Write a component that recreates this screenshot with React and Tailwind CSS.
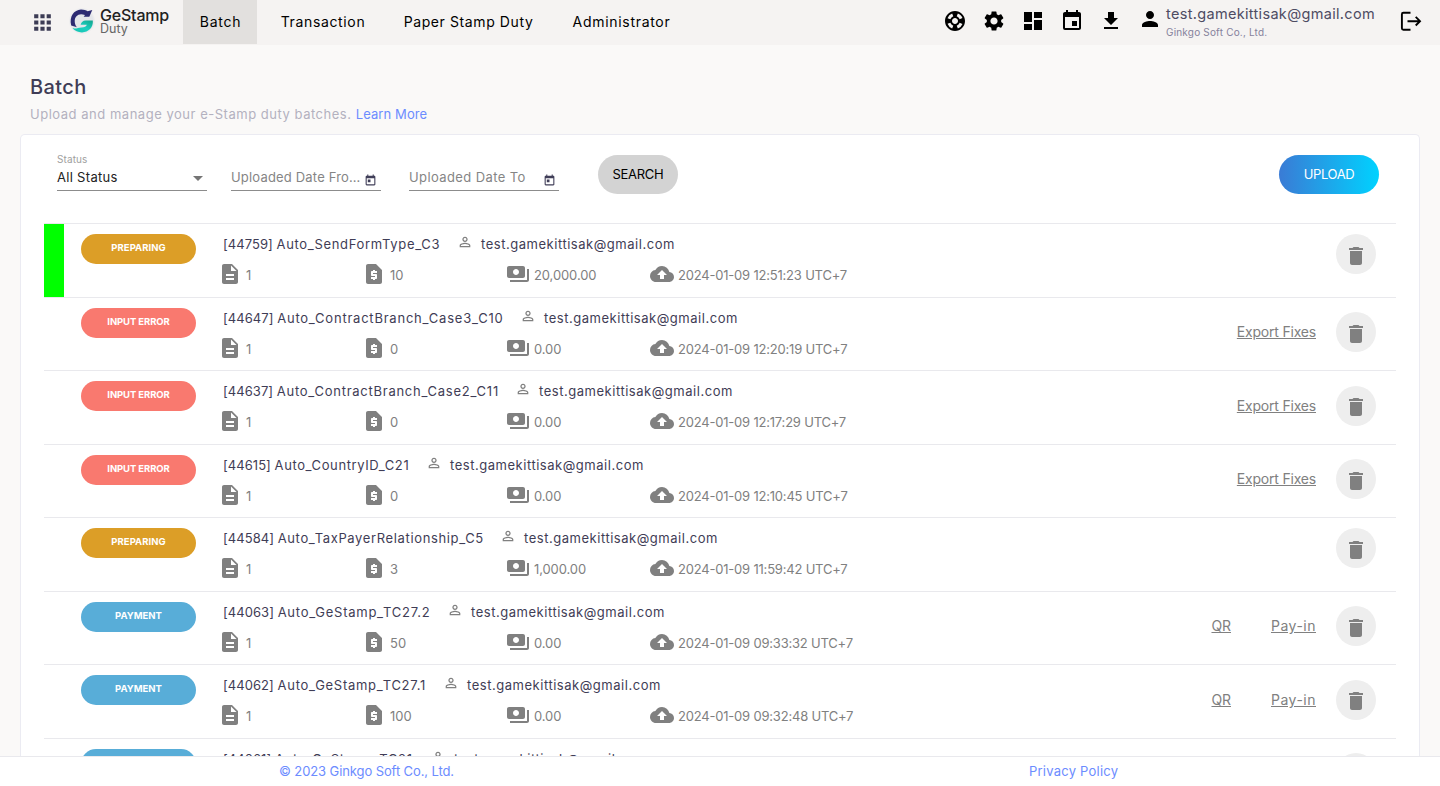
import React from "react";
import { MdApps, MdSupport, MdSettings, MdDashboard, MdEvent, MdDownload, MdPerson, MdDescription, MdRequestPage, MdPayments, MdBackup, MdPersonOutline, MdDelete, MdToday, MdArrowDropDown } from "react-icons/md";

const STATUS = {
  PREPARING: "bg-[#dc9e27] text-[9.5px] tracking-[0.05px]",
  "INPUT ERROR": "bg-[#f9796f] text-[9.5px] tracking-[-0.1px]",
  PAYMENT: "bg-[#58add8] text-[9.5px] tracking-[0px]",
};

const LINK_TRACKING = {
  "Export Fixes": "tracking-[-0.2px]",
  QR: "tracking-[-0.1px]",
  "Pay-in": "tracking-[0.5px]",
};

const ROWS = [
  { id: "44759", name: "Auto_SendFormType_C3", w: "w-[218px] tracking-[0.68px]", h: "h-[74px]", top: "mt-[10px]", icon: "mt-[4px]", status: "PREPARING", count: "10", amount: "20,000.00", date: "2024-01-09 12:51:23 UTC+7", links: [], active: true },
  { id: "44647", name: "Auto_ContractBranch_Case3_C10", w: "w-[281px] tracking-[0.78px]", h: "h-[73px]", top: "mt-[14px]", icon: "mt-[4px]", status: "INPUT ERROR", count: "0", amount: "0.00", date: "2024-01-09 12:20:19 UTC+7", links: ["Export Fixes"] },
  { id: "44637", name: "Auto_ContractBranch_Case2_C11", w: "w-[276px] tracking-[0.74px]", h: "h-[74px]", top: "mt-[15px]", icon: "mt-[2px]", status: "INPUT ERROR", count: "0", amount: "0.00", date: "2024-01-09 12:17:29 UTC+7", links: ["Export Fixes"] },
  { id: "44615", name: "Auto_CountryID_C21", w: "w-[187px] tracking-[0.6px]", h: "h-[73px]", top: "mt-[14px]", icon: "mt-[4px]", status: "INPUT ERROR", count: "0", amount: "0.00", date: "2024-01-09 12:10:45 UTC+7", links: ["Export Fixes"] },
  { id: "44584", name: "Auto_TaxPayerRelationship_C5", w: "w-[261px] tracking-[0.64px]", h: "h-[74px]", top: "mt-[10px]", icon: "mt-[4px]", status: "PREPARING", count: "3", amount: "1,000.00", date: "2024-01-09 11:59:42 UTC+7", links: [] },
  { id: "44063", name: "Auto_GeStamp_TC27.2", w: "w-[208px] tracking-[0.74px]", h: "h-[73px]", top: "mt-[14px]", icon: "mt-[4px]", status: "PAYMENT", count: "50", amount: "0.00", date: "2024-01-09 09:33:32 UTC+7", links: ["QR", "Pay-in"] },
  { id: "44062", name: "Auto_GeStamp_TC27.1", w: "w-[204px] tracking-[0.72px]", h: "h-[74px]", top: "mt-[15px]", icon: "mt-[2px]", status: "PAYMENT", count: "100", amount: "0.00", date: "2024-01-09 09:32:48 UTC+7", links: ["QR", "Pay-in"] },
  { id: "44061", name: "Auto_GeStamp_TC21", w: "w-[191px] tracking-[0.66px]", h: "h-[74px]", top: "mt-[14px]", icon: "mt-[4px]", status: "PAYMENT", count: "100", amount: "0.00", date: "2024-01-09 09:31:12 UTC+7", links: ["QR", "Pay-in"] },
];

function Logo() {
  return (
    <svg className="h-7 w-7 shrink-0" viewBox="0 0 28 28">
      <defs>
        <linearGradient id="teal" x1="0" y1="1" x2="1" y2="0">
          <stop offset="0" stopColor="#15c3b0" />
          <stop offset="0.5" stopColor="#1ccfc0" />
          <stop offset="1" stopColor="#12a58d" />
        </linearGradient>
        <radialGradient id="halo">
          <stop offset="0.8" stopColor="#e3e5ea" />
          <stop offset="1" stopColor="#f5f3f2" />
        </radialGradient>
      </defs>
      <circle cx="14" cy="14" r="13.500" fill="url(#halo)" />
      <path d="M3.200 18.500C1 9.500 6 3 13 2.600c3 0 5 .8 6.600 1.700L24.300 3l-3 6.700h-5.600l1.300-1.600C11 5.500 6.800 9 6.700 14c0 3 1 5 2.300 6.200L3.200 18.500z" fill="#2c2a72" />
      <path d="M4.500 21.300C9 21.800 10 20.600 13.500 20.400c3 0 4.700-.9 5.300-2.600H12.600c.7-2.400 2.400-4.100 5-4.200h7.200C25.500 20.500 20.500 25.300 14 25.400 10 25.400 7 24 4.500 21.300z" fill="url(#teal)" />
    </svg>
  );
}

function LogoutIcon({ className }) {
  return (
    <svg className={className} viewBox="0 0 24 24" fill="none" stroke="currentColor" strokeWidth="1.900">
      <path d="M11.500 3.800H4.400a1.500 1.500 0 0 0-1.500 1.500v13.900a1.500 1.500 0 0 0 1.500 1.500h7.100" />
      <path d="M8.500 12.200H20.600M16.700 7.900l4.300 4.300-4.300 4.300" />
    </svg>
  );
}

function Nav({ children, className }) {
  return <a className={"flex h-11 items-center justify-center whitespace-nowrap pb-px text-black " + className}>{children}</a>;
}

function Header() {
  return (
    <header className="flex h-[45px] shrink-0 bg-[#f5f3f2]">
      <div className="flex w-[183px] shrink-0 pl-[30px]">
        <MdApps className="mt-[10px] size-[25px] shrink-0 text-[#3c3c55]" />
        <div className="ml-[13px] mt-[7px]"><Logo /></div>
        <div className="ml-[4px] mt-[6px] text-[#222]">
          <div className="text-[16px] font-medium leading-[18px] tracking-[-0.2px]">GeStamp</div>
          <div className="-mt-[3px] text-[12.5px] leading-[15px] text-[#666]">Duty</div>
        </div>
      </div>
      <nav className="flex text-[14px]">
        <Nav className="w-[74px] bg-[#e2e0de] pl-px tracking-[0.75px]">Batch</Nav>
        <Nav className="ml-[23px] w-[86px] tracking-[0.65px]">Transaction</Nav>
        <Nav className="ml-[37px] w-[131px] tracking-[0.6px]">Paper Stamp Duty</Nav>
        <Nav className="ml-[38px] w-[99px] tracking-[0.7px]">Administrator</Nav>
      </nav>
      <div className="ml-auto flex pr-[17px] text-black">
        <div className="mt-[9px] flex gap-[15px]">
          <MdSupport className="size-6" />
          <MdSettings className="size-6" />
          <MdDashboard className="size-6" />
          <MdEvent className="size-6" />
          <MdDownload className="size-6" />
        </div>
        <MdPerson className="ml-[15px] mt-[7px] size-6" />
        <div className="ml-[4px] mt-[4px] w-[210px] whitespace-nowrap">
          <div className="text-[14.5px] leading-[20px] tracking-[0.32px] text-[#4e4c63]">test.gamekittisak@gmail.com</div>
          <div className="text-[10px] leading-[17px] tracking-[0.19px] text-[#85829c]">Ginkgo Soft Co., Ltd.</div>
        </div>
        <LogoutIcon className="ml-[23px] mt-[9px] size-6" />
      </div>
    </header>
  );
}

function DateField({ label, className, tracking, iconGap }) {
  return (
    <div className={"flex h-[22px] w-[150px] border-b border-[#8c8c8c] " + className}>
      <span className={"whitespace-nowrap text-[13px] leading-[17px] text-[#858585] " + tracking}>{label}</span>
      <MdToday className={"ml-auto mt-[5px] size-[13px] shrink-0 text-[#403e58] " + iconGap} />
    </div>
  );
}

function Filters() {
  return (
    <div className="flex h-[88px] pl-[13px]">
      <div className="mt-[18px] w-[150px]">
        <div className="h-[12px] text-[10px] leading-[12px] tracking-[0.1px] text-[#a0a0a0]">Status</div>
        <div className="flex h-[26px] justify-between border-b border-[#8c8c8c]">
          <span className="mt-[4px] text-[13px] leading-[17px] tracking-[0.3px] text-[#222]">All Status</span>
          <MdArrowDropDown className="-mr-[3px] mt-px size-6 text-[#757575]" />
        </div>
      </div>
      <DateField label="Uploaded Date Fro…" className="ml-[24px] mt-[34px]" tracking="tracking-[0.18px]" iconGap="mr-[4px]" />
      <DateField label="Uploaded Date To" className="ml-[28px] mt-[34px]" tracking="tracking-[0.4px]" iconGap="mr-[3px]" />
      <button className="ml-[39px] mt-[20px] h-[39px] w-[80px] rounded-full bg-[#d3d3d3] text-[13px] tracking-[-0.3px] text-black">SEARCH</button>
      <button className="ml-auto mr-[17px] mt-[20px] h-[39px] w-[100px] rounded-full bg-[linear-gradient(to_right,#3a7bd5,#00d2ff)] text-[13px] tracking-[-0.4px] text-white">UPLOAD</button>
    </div>
  );
}

function Row({ row }) {
  return (
    <div className={"flex shrink-0 border-t border-[#e9e9ed] " + row.h}>
      <div className={"w-5 shrink-0 " + (row.active ? "bg-[#00ff00]" : "")} />
      <div className={"ml-[17px] mt-[10px] flex h-[30px] w-[115px] shrink-0 items-center justify-center rounded-full pb-px font-bold text-white " + STATUS[row.status]}>{row.status}</div>
      <div className="ml-[28px] mt-[10px] whitespace-nowrap">
        <div className="-ml-px flex h-[22px] items-center text-[13px] text-[#3f3d56]">
          <span className={row.w}><span className="tracking-[0.05px]">[{row.id}] </span>{row.name}</span>
          <MdPersonOutline className="-mt-[7px] ml-[16px] size-4 text-[#808080]" />
          <span className="ml-[8px] tracking-[0.53px]">test.gamekittisak@gmail.com</span>
        </div>
        <div className="-ml-[6px] mt-[6px] flex h-6 items-center text-[13px] text-[#808080]">
          <div className="flex w-[144px] items-center"><MdDescription className="size-6" /><span className="ml-[4px] mt-[3px]">1</span></div>
          <div className="flex w-[144px] items-center"><MdRequestPage className="size-6" /><span className="ml-[4px] mt-[3px]">{row.count}</span></div>
          <div className="flex w-[144px] items-center"><MdPayments className="size-6" /><span className="ml-[4px] mt-[3px] tracking-[-0.1px]">{row.amount}</span></div>
          <div className="flex items-center"><MdBackup className="size-6" /><span className="ml-[4px] mt-[3px] tracking-[-0.2px]">{row.date}</span></div>
        </div>
      </div>
      <div className={"ml-auto flex h-10 gap-10 text-[14px] leading-[40px] text-[#808080] " + row.top}>
        {row.links.map((l) => <a key={l} className={"underline " + LINK_TRACKING[l]}>{l}</a>)}
      </div>
      <div className={"ml-[20px] mr-[20px] flex size-10 shrink-0 items-center justify-center rounded-full bg-[#eee] " + row.top}>
        <MdDelete className={"size-6 text-[#808080] " + row.icon} />
      </div>
    </div>
  );
}

export default function App() {
  return (
    <div className="flex h-[786px] w-[1440px] flex-col overflow-hidden bg-[#faf9f8] font-['Inter','Liberation_Sans',sans-serif]">
      <Header />
      <main className="flex min-h-0 flex-1 flex-col overflow-hidden px-[20px]">
        <div className="h-[89px] shrink-0 pl-[10px] pt-[28px]">
          <h1 className="text-[20px] font-medium leading-[28px] tracking-[0.4px] text-[#3f3d56]">Batch</h1>
          <p className="mt-[4px] text-[13px] leading-[18px] tracking-[0.52px] text-[#b3b1bf]">Upload and manage your e-Stamp duty batches. <a className="tracking-[0.1px] text-[#6c8cff]">Learn More</a></p>
        </div>
        <section className="flex flex-1 flex-col overflow-hidden rounded-t-[5px] border border-b-0 border-[#ebebf2] bg-white px-[23px]">
          <div className="shrink-0"><Filters /></div>
          {ROWS.map((r) => <Row key={r.id} row={r} />)}
        </section>
      </main>
      <footer className="flex h-[30px] shrink-0 border-t border-[#e9e9ed] bg-white text-[13px] leading-[29px] text-[#6c8cff]">
        <span className="ml-[279px] w-[750px] tracking-[-0.1px]">© 2023 Ginkgo Soft Co., Ltd.</span>
        <span className="tracking-[0.23px]">Privacy Policy</span>
      </footer>
    </div>
  );
}
